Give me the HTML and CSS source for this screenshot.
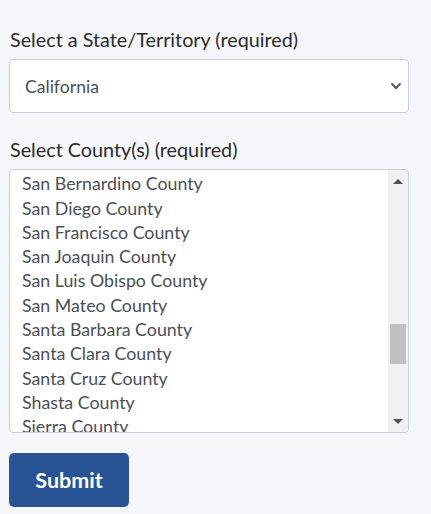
FILE: index.html
```html
<!DOCTYPE html>
<html>
<head>
<meta charset="utf-8">
<link rel="stylesheet" href="styles.css">
</head>
<body>
<form class="form">
  <div class="field">
    <label class="label">Select a State/Territory (required)</label>
    <div class="select">
      <span class="select-value">California</span>
      <svg class="chevron" width="12" height="8" viewBox="0 0 12 8"><path d="M1.5 1.5 L6 6 L10.5 1.5" fill="none" stroke="#555" stroke-width="2"/></svg>
    </div>
  </div>
  <div class="field">
    <label class="label">Select County(s) (required)</label>
    <div class="listbox">
      <div class="viewport">
        <ul class="options">
          <li>San Benito County</li>
          <li>San Bernardino County</li>
          <li>San Diego County</li>
          <li>San Francisco County</li>
          <li>San Joaquin County</li>
          <li>San Luis Obispo County</li>
          <li>San Mateo County</li>
          <li>Santa Barbara County</li>
          <li>Santa Clara County</li>
          <li>Santa Cruz County</li>
          <li>Shasta County</li>
          <li>Sierra County</li>
        </ul>
      </div>
      <div class="scrollbar">
        <div class="arrow arrow-up"></div>
        <div class="track"><div class="thumb"></div></div>
        <div class="arrow arrow-down"></div>
      </div>
    </div>
  </div>
  <button type="button" class="submit">Submit</button>
</form>
</body>
</html>
```
FILE: styles.css
```css
html, body {
  margin: 0;
  padding: 0;
  background: #f5f6fa;
}
body {
  font-family: Lato, "Open Sans", sans-serif;
  color: #333;
}
.form {
  display: flex;
  flex-direction: column;
  padding: 27px 22px 7px 9px;
}
.field {
  display: flex;
  flex-direction: column;
}
.label {
  font-size: 19.8px;
  line-height: 24px;
  padding-left: 1px;
  color: #2b2b2b;
  margin-bottom: 8px;
}
.select {
  height: 52px;
  border: 1px solid #c3cfdf;
  border-radius: 4px;
  background: #fff;
  display: flex;
  align-items: center;
  justify-content: space-between;
  padding: 0 6px 0 15px;
  margin-bottom: 24px;
}
.select-value {
  font-size: 17.6px;
  color: #4a4f55;
}
.chevron {
  display: block;
}
.listbox {
  height: 262px;
  border: 1px solid #c3cfdf;
  border-radius: 4px;
  background: #fff;
  display: flex;
  overflow: hidden;
  margin-bottom: 20px;
}
.viewport {
  flex: 1;
  overflow: hidden;
}
.options {
  list-style: none;
  margin: -23px 0 0 0;
  padding: 0 0 0 12px;
}
.options li {
  font-size: 17.8px;
  line-height: 24.3px;
  color: #4a4f55;
  white-space: nowrap;
}
.scrollbar {
  width: 20px;
  background: #f1f1f1;
  display: flex;
  flex-direction: column;
  align-items: center;
}
.arrow {
  height: 22px;
  width: 100%;
  display: flex;
  align-items: center;
  justify-content: center;
}
.arrow::before {
  content: "";
  width: 0;
  height: 0;
  border-left: 5px solid transparent;
  border-right: 5px solid transparent;
}
.arrow-up::before {
  border-bottom: 5px solid #505050;
}
.arrow-down::before {
  border-top: 5px solid #505050;
}
.track {
  flex: 1;
  width: 100%;
  display: flex;
  flex-direction: column;
  align-items: center;
  padding-top: 132px;
}
.thumb {
  width: 16px;
  height: 40px;
  background: #c1c1c1;
}
.submit {
  align-self: flex-start;
  width: 120px;
  height: 54px;
  border: none;
  border-radius: 5px;
  background: #285394;
  color: #fff;
  font-family: Lato, "Open Sans", sans-serif;
  font-weight: 700;
  font-size: 21.5px;
}
```
